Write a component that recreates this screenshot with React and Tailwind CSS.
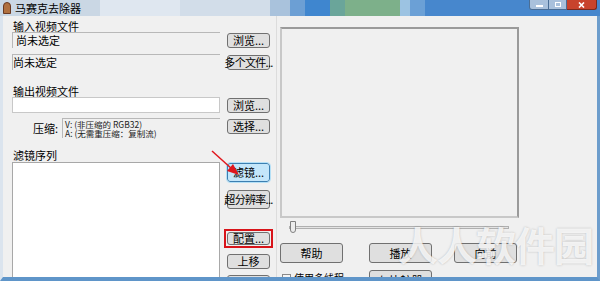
import React from "react";

const F = { fontFamily: '"Noto Sans CJK SC", "Microsoft YaHei", sans-serif' };

function Btn({ children, className = "", blue = false }) {
  return (
    <div
      className={`flex shrink-0 items-center justify-center whitespace-nowrap rounded-[3px] border text-[11px] leading-none text-black ${
        blue
          ? "border-[#3c7fb1] bg-[#c4e6fa] outline outline-1 outline-[#b5e0f6]"
          : "border-[#707070] bg-[#dfdfdf]"
      } ${className}`}
    >
      {children}
    </div>
  );
}

function Field({ children, className = "" }) {
  return (
    <div
      className={`flex h-[16px] w-[208px] shrink-0 items-center border-t border-l border-[#b8b8b8] text-[11px] leading-none ${className}`}
    >
      {children}
    </div>
  );
}

export default function App() {
  return (
    <div className="relative flex h-[281px] w-[600px] flex-col overflow-hidden bg-[#f0f0f0]" style={F}>
      {/* title bar */}
      <div className="flex h-[16px] shrink-0 items-stretch">
        <div className="flex w-[100px] items-center bg-[#cad7e4]">
          <div className="ml-[3px] h-[12px] w-[8px] rounded-t-[4px] border border-[#6b3a22] bg-[#b0703f]" />
          <span className="ml-[4px] whitespace-nowrap text-[11px] leading-none text-black">马赛克去除器</span>
        </div>
        <div className="w-[80px] bg-[#dfe7f0]" />
        <div className="w-[90px] bg-[#d2dde9]" />
        <div className="w-[20px] bg-[#a9c2dc]" />
        <div className="w-[15px] bg-[#6c9fd4]" />
        <div className="w-[25px] bg-[#3f86cf]" />
        <div className="w-[15px] bg-[#6aa59a]" />
        <div className="w-[55px] bg-[#7db08a]" />
        <div className="w-[10px] bg-[#9cc3e2]" />
        <div className="w-[15px] bg-[#6ba0d6]" />
        <div className="flex flex-1 items-start justify-end bg-[#4787cd] pr-[3px]">
          <div className="flex h-[10px]">
            <div className="flex w-[20px] items-center justify-center rounded-bl-[3px] border border-t-0 border-[#4a6e96] bg-[#a9c1dc]">
              <div className="mt-[2px] h-[2px] w-[7px] bg-white" />
            </div>
            <div className="flex w-[18px] items-center justify-center border border-t-0 border-l-0 border-[#4a6e96] bg-[#a9c1dc]">
              <div className="h-[5px] w-[6px] border border-white" />
            </div>
            <div className="flex w-[30px] items-center justify-center rounded-br-[3px] border border-t-0 border-l-0 border-[#7a2a1e] bg-[#c8432c]">
              <svg width="7" height="6" viewBox="0 0 7 6">
                <path d="M1 0.5 L6 5.5 M6 0.5 L1 5.5" stroke="#fff" strokeWidth="1.6" />
              </svg>
            </div>
          </div>
        </div>
      </div>

      {/* body */}
      <div className="flex min-h-0 flex-1 overflow-hidden border-l-[3px] border-r-[3px] border-b-[4px] border-l-[#dbe4ee] border-r-[#6d9dcc] border-b-[#5f95c9]">
        {/* left column */}
        <div className="flex w-[274px] shrink-0 flex-col border-r border-[#dcdcdc] pl-[9px]">
          <div className="mt-[4px] h-[12px] shrink-0 pl-[1px] text-[11px] leading-[12px]">输入视频文件</div>
          <div className="flex shrink-0 items-center gap-[7px]">
            <Field className="pl-[3px]">尚未选定</Field>
            <Btn className="h-[15px] w-[43px]">浏览...</Btn>
          </div>
          <div className="mt-[6px] flex shrink-0 items-center gap-[7px]">
            <Field>尚未选定</Field>
            <Btn className="h-[15px] w-[43px] text-[8.5px] tracking-[-0.7px]">多个文件...</Btn>
          </div>

          <div className="mt-[15px] h-[12px] shrink-0 pl-[1px] text-[11px] leading-[12px]">输出视频文件</div>
          <div className="flex shrink-0 items-center gap-[7px]">
            <div className="h-[16px] w-[208px] border border-[#c8c8c8] bg-white" />
            <Btn className="h-[15px] w-[43px]">浏览...</Btn>
          </div>
          <div className="mt-[5px] flex shrink-0 items-start gap-[7px]">
            <div className="flex w-[208px] shrink-0 items-center">
              <div className="w-[50px] shrink-0 pl-[21px] text-[11px] leading-none">压缩:</div>
              <div className="flex h-[20px] w-[158px] shrink-0 flex-col justify-center border-t border-l border-[#b8b8b8] pl-[2px] text-[8.5px] leading-[9px] text-[#222222]">
                <div>V: (非压缩的 RGB32)</div>
                <div>A: (无需重压缩：复制流)</div>
              </div>
            </div>
            <Btn className="mt-[1px] h-[15px] w-[43px]">选择...</Btn>
          </div>

          <div className="mt-[11px] h-[12px] shrink-0 pl-[1px] text-[11px] leading-[12px]">滤镜序列</div>
          <div className="mt-[1px] flex min-h-0 flex-1 gap-[7px]">
            <div className="w-[208px] shrink-0 border border-b-0 border-[#a8a8a8] bg-white" />
            <div className="flex w-[43px] flex-col">
              <Btn blue className="mt-[1px] h-[19px] w-[43px]">滤镜...</Btn>
              <Btn className="mt-[8px] h-[19px] w-[43px] text-[8.5px] tracking-[-0.7px]">超分辨率...</Btn>
              <div className="-ml-[3px] mt-[20px] w-[49px] shrink-0 border-2 border-[#d8141a] p-[1px]">
                <Btn className="h-[13px] w-[43px]">配置...</Btn>
              </div>
              <Btn className="mt-[6px] h-[15px] w-[43px]">上移</Btn>
              <Btn className="mt-[6px] h-[15px] w-[43px]">下移</Btn>
            </div>
          </div>
        </div>

        {/* right column */}
        <div className="flex flex-col pl-[3px]">
          <div className="mt-[11px] h-[191px] w-[239px] shrink-0 border-2 border-[#9a9a9a] border-b-[#c8c8c8] border-l-[#c8c8c8] bg-[#f0f0f0]" />
          <div className="relative mt-[3px] flex h-[12px] shrink-0 items-center pl-[9px]">
            <div className="h-[3px] w-[220px] border border-[#b0b0b0] bg-[#e4e4e4]" />
            <div className="absolute left-[10px] top-0 h-[12px] w-[6px] rounded-b-[3px] border border-[#808080] bg-[#ececec]" />
          </div>
          <div className="mt-[10px] flex shrink-0 items-center">
            <Btn className="h-[20px] w-[63px]">帮助</Btn>
            <Btn className="ml-[26px] h-[20px] w-[63px]">播放</Btn>
            <Btn className="ml-[22px] h-[20px] w-[63px]">向前</Btn>
          </div>
          <div className="mt-[7px] flex shrink-0 items-start">
            <div className="flex w-[89px] shrink-0 items-center pl-[2px] pt-[3px]">
              <div className="h-[9px] w-[9px] border border-[#8a8a8a] bg-[#f4f4f4]" />
              <span className="ml-[3px] text-[10px] leading-none">使用多线程</span>
            </div>
            <Btn className="h-[20px] w-[63px] text-[10px]">与比较器</Btn>
          </div>
        </div>
      </div>

      {/* red arrow annotation */}
      <svg className="pointer-events-none absolute left-0 top-0" width="600" height="281">
        <line x1="212" y1="151" x2="232" y2="169" stroke="#e0161c" strokeWidth="1.5" />
        <polygon points="239,175 227,171 233,164" fill="#e0161c" />
      </svg>

      {/* watermark */}
      <div className="pointer-events-none absolute left-[398px] top-[224px] whitespace-nowrap text-[40px] font-bold leading-none tracking-[-1px] text-white/80 [text-shadow:0_0_2px_rgba(90,90,90,0.4)]">
        人人软件园
      </div>
    </div>
  );
}
